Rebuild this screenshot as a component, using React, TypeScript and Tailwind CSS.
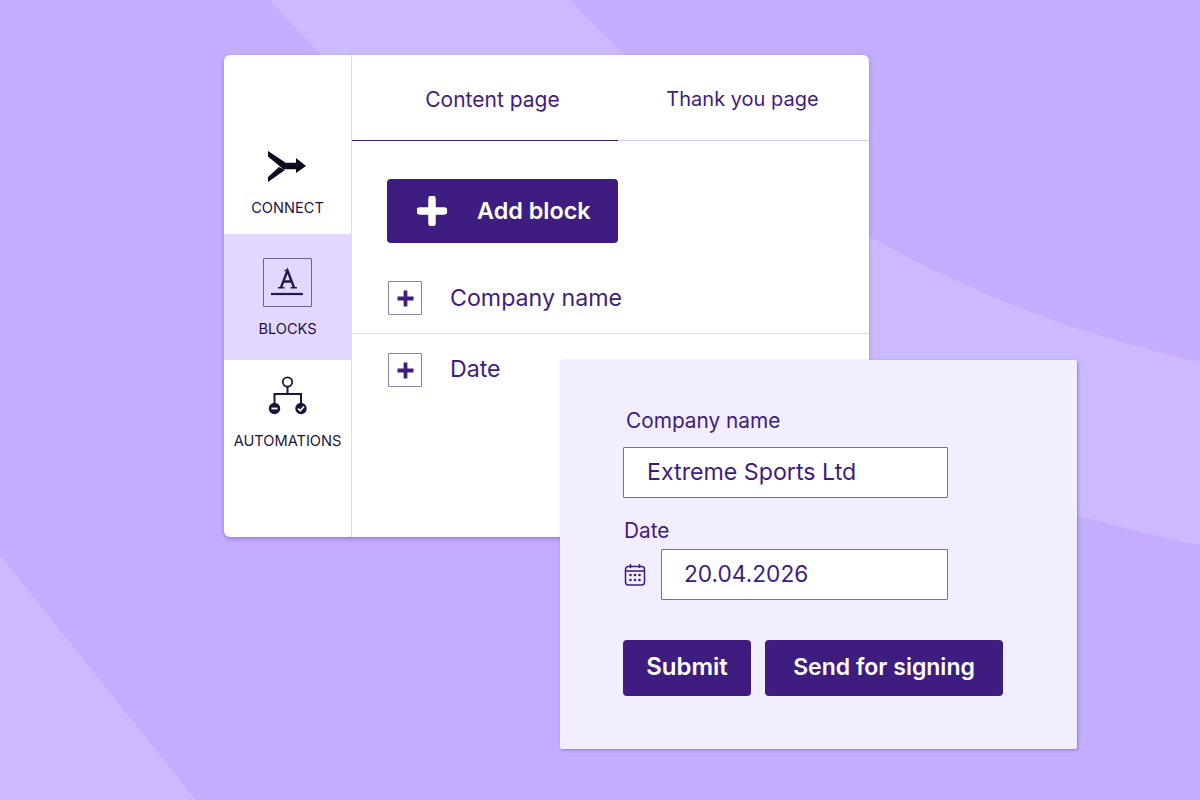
function PlusBox() {
  return (
    <div className="flex h-[34px] w-[34px] shrink-0 items-center justify-center rounded-[1px] border border-[#8f7fb8] bg-white">
      <svg className="block" width="17" height="17" viewBox="0 0 17 17"><path d="M8.500 .5v16M.5 8.500h16" stroke="#3f1d80" strokeWidth="3.800" /></svg>
    </div>
  );
}

function ConnectIcon() {
  return (
    <svg className="block" width="40" height="34" viewBox="0 0 40 34" fill="#0d0a1f">
      <path d="M0 1 L17.700 12.700 H28 V8 L38 16 L28 23 V19.300 H15.300 L0 6.500 Z" />
      <path d="M11 17 L17 20 L0 32 V27 Z" />
    </svg>
  );
}

function BlocksIcon() {
  return (
    <div className="h-[49px] w-[49px] rounded-[1px] border border-[#6f5f96]">
      <svg className="block" width="47" height="47" viewBox="0 0 47 47" fill="none" stroke="#24164f">
        <path d="M17 28.500 L23.500 11.500 L30 28.500 M19 22.500 H28" strokeWidth="2.400" />
        <path d="M14 28.700 H20.500 M26.500 28.700 H33 M20.500 11.500 H24" strokeWidth="1.500" />
        <path d="M7 35 H39" strokeWidth="2.200" />
      </svg>
    </div>
  );
}

function AutomationIcon() {
  return (
    <svg className="block" width="40" height="41" viewBox="0 0 40 41" fill="none">
      <circle cx="19.500" cy="7" r="4.700" stroke="#1c1440" strokeWidth="1.800" />
      <path d="M19.500 12 V19 M6.500 30 V19 H33 V30" stroke="#1c1440" strokeWidth="2" />
      <circle cx="6.500" cy="33.500" r="5.700" fill="#1c1440" />
      <circle cx="33" cy="33.500" r="5.700" fill="#1c1440" />
      <path d="M3.500 33.500 H9.500" stroke="#fff" strokeWidth="1.800" />
      <path d="M30 33.500 L32.200 35.700 L36 31.500" stroke="#fff" strokeWidth="1.700" />
    </svg>
  );
}

function CalendarIcon() {
  return (
    <svg className="block" width="22" height="24" viewBox="0 0 22 24" fill="none">
      <rect x="1.500" y="3.500" width="19" height="18.500" rx="3" stroke="#3f1d80" strokeWidth="1.500" />
      <path d="M1.500 8 H20.500 M6.500 1 V5 M15.500 1 V5" stroke="#3f1d80" strokeWidth="1.500" />
      <g fill="#3f1d80">
        <circle cx="6.500" cy="12" r="1.300" /><circle cx="11" cy="12" r="1.300" /><circle cx="15.500" cy="12" r="1.300" />
        <circle cx="6.500" cy="17" r="1.300" /><circle cx="11" cy="17" r="1.300" /><circle cx="15.500" cy="17" r="1.300" />
      </g>
    </svg>
  );
}

function SideLabel({ children }: { children: string }) {
  return <span className="block whitespace-nowrap text-[14.600px] leading-[18px] text-[#1c1440]">{children}</span>;
}

export default function App() {
  return (
    <div className="relative h-[800px] w-[1200px] overflow-hidden bg-[#c4acff] font-['Inter',sans-serif]">
      <svg className="absolute inset-0" width="1200" height="800" viewBox="0 0 1200 800">
        <path d="M270 0 H570 C690 125 880 290 1200 362 V545 C920 490 560 330 270 0 Z" fill="#cdb9ff" />
        <path d="M0 555 L196 800 H0 Z" fill="#cdb9ff" />
      </svg>

      <div className="relative pl-[224px] pt-[55px]">
        <div className="flex h-[482px] w-[645px] overflow-hidden rounded-[6px] bg-white shadow-[0_2px_4px_rgba(70,40,140,0.35)]">
          <aside className="flex w-[128px] shrink-0 flex-col border-r border-[#e3d7ff] pt-[95px]">
            <div className="flex h-[84px] flex-col items-center">
              <ConnectIcon />
              <div className="mt-[15px]"><SideLabel>CONNECT</SideLabel></div>
            </div>
            <div className="flex h-[126px] flex-col items-center bg-[#e4d7ff] pt-[24px]">
              <BlocksIcon />
              <div className="mt-[13px]"><SideLabel>BLOCKS</SideLabel></div>
            </div>
            <div className="flex flex-col items-center pt-[15px]">
              <AutomationIcon />
              <div className="mt-[16px]"><SideLabel>AUTOMATIONS</SideLabel></div>
            </div>
          </aside>

          <main className="min-w-0 flex-1">
            <div className="flex h-[86px] text-[#3f1d80]">
              <div className="flex w-[266px] items-center justify-center border-b border-[#3f1d80] pl-[15px] pt-[4px] text-[21px]">Content page</div>
              <div className="flex flex-1 items-center justify-center border-b border-[#d9c9ff] pr-[2px] pt-[3px] text-[20px]">Thank you page</div>
            </div>

            <div className="pl-[35px] pt-[38px]">
              <button className="flex h-[64px] w-[231px] items-center rounded-[4px] bg-[#3f1d80] pl-[30px] text-[23.400px] font-semibold text-white">
                <svg className="block" width="30" height="30" viewBox="0 0 30 30"><path d="M15 3v24M3 15h24" stroke="#fff" strokeWidth="7.500" strokeLinecap="round" /></svg>
                <span className="ml-[30px]">Add block</span>
              </button>
            </div>

            <div className="mt-[38px] flex h-[53px] items-start gap-[28px] border-b border-[#e2e0e8] pl-[36px] text-[23.200px] text-[#3f1d80]">
              <PlusBox />
              <span className="leading-[34px]">Company name</span>
            </div>
            <div className="mt-[19px] flex items-start gap-[28px] pl-[36px] text-[23.200px] text-[#3f1d80]">
              <PlusBox />
              <span className="leading-[32px]">Date</span>
            </div>
          </main>
        </div>
      </div>

      <div className="absolute left-[560px] top-[360px] h-[389px] w-[517px] rounded-[2px] bg-[#f3eeff] pl-[63px] pt-[47px] text-[#3f1d80] shadow-[1px_1px_3px_rgba(70,40,140,0.4)]">
        <div className="ml-[3px] text-[20.800px] leading-[28px]">Company name</div>
        <div className="mt-[12px] flex h-[51px] w-[325px] items-center rounded-[1px] border border-[#7e68ad] bg-white pl-[23px] text-[23.200px]">Extreme Sports Ltd</div>
        <div className="ml-[1px] mt-[19px] text-[20.800px] leading-[28px]">Date</div>
        <div className="mt-[4px] flex items-center">
          <div className="ml-[1px] w-[37px]"><CalendarIcon /></div>
          <div className="flex h-[51px] w-[287px] items-center rounded-[1px] border border-[#7e68ad] bg-white pl-[22px] text-[22.700px]">20.04.2026</div>
        </div>
        <div className="mt-[40px] flex gap-[14px] font-semibold text-white">
          <button className="h-[56px] w-[128px] rounded-[4px] bg-[#3f1d80] pb-[2px] text-[24px]">Submit</button>
          <button className="h-[56px] w-[238px] rounded-[4px] bg-[#3f1d80] pb-[2px] text-[23px]">Send for signing</button>
        </div>
      </div>
    </div>
  );
}
